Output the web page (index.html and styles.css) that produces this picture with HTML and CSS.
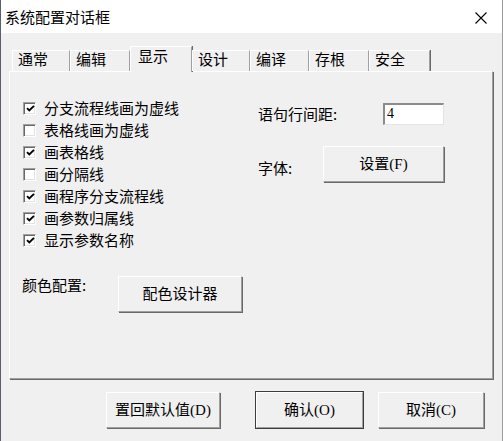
FILE: index.html
```html
<!DOCTYPE html>
<html>
<head>
<meta charset="utf-8">
<link rel="stylesheet" href="styles.css">
</head>
<body>
<div class="window">
  <div class="titlebar">
    <span class="title">系统配置对话框</span>
    <svg class="close" width="12" height="12" viewBox="0 0 12 12"><path d="M0.5 0.5 L11.5 11.5 M11.5 0.5 L0.5 11.5" stroke="#000" stroke-width="1.1" fill="none"/></svg>
  </div>
  <div class="client">
    <div class="tabs">
      <div class="tab w58">通常</div>
      <div class="tab w60">编辑</div>
      <div class="tab active w62">显示</div>
      <div class="tab w58">设计</div>
      <div class="tab w59">编译</div>
      <div class="tab w60">存根</div>
      <div class="tab w61">安全</div>
    </div>
    <div class="panel">
      <div class="leftcol">
        <ul class="checks">
          <li><span class="cb on"><svg viewBox="0 0 9 9" width="9" height="9"><path d="M1 4.2 L3.3 6.5 L8 1.8" stroke="#000" stroke-width="1.9" fill="none"/></svg></span>分支流程线画为虚线</li>
          <li><span class="cb"></span>表格线画为虚线</li>
          <li><span class="cb on"><svg viewBox="0 0 9 9" width="9" height="9"><path d="M1 4.2 L3.3 6.5 L8 1.8" stroke="#000" stroke-width="1.9" fill="none"/></svg></span>画表格线</li>
          <li><span class="cb"></span>画分隔线</li>
          <li><span class="cb on"><svg viewBox="0 0 9 9" width="9" height="9"><path d="M1 4.2 L3.3 6.5 L8 1.8" stroke="#000" stroke-width="1.9" fill="none"/></svg></span>画程序分支流程线</li>
          <li><span class="cb on"><svg viewBox="0 0 9 9" width="9" height="9"><path d="M1 4.2 L3.3 6.5 L8 1.8" stroke="#000" stroke-width="1.9" fill="none"/></svg></span>画参数归属线</li>
          <li><span class="cb on"><svg viewBox="0 0 9 9" width="9" height="9"><path d="M1 4.2 L3.3 6.5 L8 1.8" stroke="#000" stroke-width="1.9" fill="none"/></svg></span>显示参数名称</li>
        </ul>
        <div class="colorrow">
          <span class="lbl colorlbl">颜色配置:</span>
          <button class="btn colorbtn">配色设计器</button>
        </div>
      </div>
      <div class="rightcol">
        <div class="row">
          <span class="lbl spacinglbl">语句行间距:</span>
          <span class="edit">4</span>
        </div>
        <div class="row fontrow">
          <span class="lbl fontlbl">字体:</span>
          <button class="btn fontbtn">设置(F)</button>
        </div>
      </div>
    </div>
    <div class="footer">
      <button class="btn b-reset">置回默认值(D)</button>
      <button class="btn b-ok default">确认(O)</button>
      <button class="btn b-cancel">取消(C)</button>
    </div>
  </div>
</div>
</body>
</html>
```
FILE: styles.css
```css
html, body {
  margin: 0;
  padding: 0;
  width: 503px;
  height: 441px;
  overflow: hidden;
  background: #f0f0f0;
}
body {
  font-family: "Liberation Serif", "Noto Sans CJK SC", sans-serif;
  font-size: 15px;
  color: #000;
}
.window {
  width: 503px;
  height: 441px;
  box-sizing: border-box;
  border-left: 1px solid #5b5f6a;
  border-right: 1px solid #9a9a9a;
  background: #f0f0f0;
}
.titlebar {
  height: 33px;
  background: #fff;
  display: flex;
  align-items: center;
  justify-content: space-between;
  padding: 0 15px 0 4px;
}
.title {
  font-family: "Noto Sans CJK SC", sans-serif;
  font-size: 15px;
  line-height: 20px;
  margin-top: 1px;
}
.close {
  display: block;
  margin-top: 2px;
}
.client {
  padding: 0 8px 0 8px;
}
.tabs {
  display: flex;
  align-items: flex-end;
  height: 25px;
  margin-top: 14px;
  margin-left: 3px;
  position: relative;
  z-index: 2;
  margin-bottom: -1px;
}
.tab {
  box-sizing: border-box;
  height: 21px;
  margin-bottom: 1px;
  border-top: 1px solid #fff;
  border-left: 1px solid #fff;
  border-right: 1px solid #a0a0a0;
  box-shadow: 1px 0 0 #696969;
  padding-left: 5px;
  font-family: "Noto Sans CJK SC", sans-serif;
  line-height: 16px;
  background: #f0f0f0;
}
.tab.active {
  height: 26px;
  margin-bottom: 0;
  padding-left: 7px;
  line-height: 17px;
}
.w58 { width: 58px; }
.w59 { width: 59px; }
.w60 { width: 60px; }
.w61 { width: 61px; }
.w62 { width: 62px; }
.panel {
  box-sizing: border-box;
  height: 308px;
  width: 484px;
  border-top: 1px solid #fff;
  border-left: 1px solid #fff;
  border-right: 1px solid #a0a0a0;
  border-bottom: 1px solid #a0a0a0;
  box-shadow: 1px 1px 0 #696969;
  display: grid;
  grid-template-columns: 235px 1fr;
  padding: 25px 0 0 13px;
  font-family: "Noto Sans CJK SC", sans-serif;
}
.checks {
  list-style: none;
  margin: 0;
  padding: 0;
}
.checks li {
  height: 22px;
  display: flex;
  align-items: center;
  line-height: 22px;
  white-space: nowrap;
}
.cb {
  box-sizing: border-box;
  width: 13px;
  height: 13px;
  flex: none;
  background: #fff;
  border-top: 1px solid #a0a0a0;
  border-left: 1px solid #a0a0a0;
  border-right: 1px solid #fff;
  border-bottom: 1px solid #fff;
  box-shadow: inset 1px 1px 0 #696969, inset -1px -1px 0 #e3e3e3;
  margin-right: 8px;
  display: flex;
  align-items: center;
  justify-content: center;
}
.cb svg {
  display: block;
  margin-left: 1px;
  margin-top: 1px;
}
.colorrow {
  display: flex;
  align-items: flex-start;
  margin-top: 25px;
  margin-left: -1px;
}
.lbl {
  white-space: nowrap;
  line-height: 18px;
}
.colorlbl {
  width: 96px;
  flex: none;
}
.btn {
  box-sizing: border-box;
  font-family: "Liberation Serif", "Noto Sans CJK SC", sans-serif;
  font-size: 15px;
  color: #000;
  background: #f0f0f0;
  border-top: 1px solid #fff;
  border-left: 1px solid #fff;
  border-right: 1px solid #a0a0a0;
  border-bottom: 1px solid #a0a0a0;
  box-shadow: 1px 1px 0 #696969;
  padding: 0;
  margin: 0;
  line-height: 20px;
  display: flex;
  align-items: center;
  justify-content: center;
}
.colorbtn {
  width: 124px;
  height: 36px;
  margin-top: 0;
}
.rightcol {
  padding-top: 6px;
}
.row {
  display: flex;
  align-items: center;
}
.spacinglbl {
  width: 125px;
  flex: none;
}
.edit {
  box-sizing: border-box;
  width: 61px;
  height: 22px;
  background: #fff;
  border-top: 2px solid #8c8c8c;
  border-left: 2px solid #8c8c8c;
  border-right: 1px solid #e3e3e3;
  border-bottom: 1px solid #e3e3e3;
  padding-left: 2px;
  font-family: "Liberation Serif", serif;
  font-size: 14px;
  line-height: 18px;
}
.fontrow {
  margin-top: 21px;
}
.fontlbl {
  width: 65px;
  flex: none;
  padding-top: 7px;
}
.fontbtn {
  width: 121px;
  height: 36px;
}
.footer {
  display: flex;
  margin-top: 13px;
}
.footer .btn {
  height: 36px;
}
.b-reset {
  width: 114px;
  margin-left: 97px;
}
.b-ok {
  width: 107px;
  margin-left: 36px;
}
.btn.default {
  outline: 1px solid #3c3c3c;
  outline-offset: 0;
}
.b-cancel {
  width: 106px;
  margin-left: 15px;
}
```
